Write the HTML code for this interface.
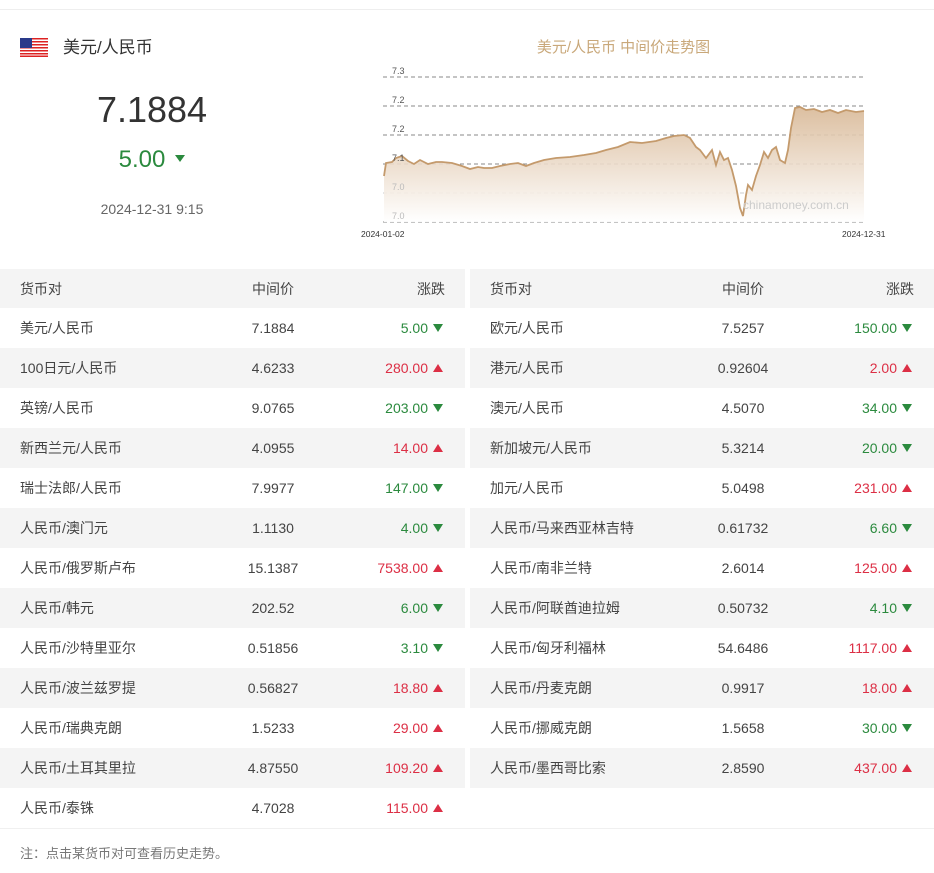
<!DOCTYPE html>
<html><head><meta charset="utf-8"><style>
*{margin:0;padding:0;box-sizing:border-box}
body{width:934px;height:873px;background:#fff;font-family:"Liberation Sans","Noto Sans CJK SC",sans-serif;color:#333;position:relative;overflow:hidden}
.abs{position:absolute;white-space:nowrap}
.g{color:#2b8a3e}.r{color:#dc2f45}
table{position:absolute;top:269px;border-collapse:collapse;font-size:14px;color:#444}
td{height:40px;padding:0}
tr:nth-child(odd){background:#f4f4f4}
tr:first-child td{height:39px}
.n{padding-left:20px;width:200px}
.m{text-align:center;width:146px}
.c{text-align:right;padding-right:22px}
.tri{display:inline-block;width:0;height:0;border-left:5px solid transparent;border-right:5px solid transparent;margin-left:5px;vertical-align:1px}
.dn{border-top:8px solid #2b8a3e}.up{border-bottom:8px solid #dc2f45}
</style></head><body>
<div class="abs" style="left:0;top:9px;width:934px;border-top:1px solid #eee"></div>
<svg class="abs" style="left:20px;top:38px" width="28" height="19" viewBox="0 0 28 19">
<rect width="28" height="19" fill="#fff"/>
<g fill="#d22"><rect y="0" width="28" height="1.5"/><rect y="3" width="28" height="1.5"/><rect y="6" width="28" height="1.5"/><rect y="9" width="28" height="1.5"/><rect y="12" width="28" height="1.5"/><rect y="15" width="28" height="1.5"/><rect y="17.5" width="28" height="1.5"/></g>
<rect width="12" height="10" fill="#2a3a8a"/></svg>
<div class="abs" style="left:63px;top:33px;font-size:17px">美元/人民币</div>
<div class="abs" style="left:0;width:304px;text-align:center;top:89px;font-size:36px;color:#333">7.1884</div>
<div class="abs g" style="left:0;width:304px;text-align:center;top:146px;font-size:24px">5.00<span class="tri dn" style="margin-left:10px;vertical-align:5px;border-left-width:5px;border-right-width:5px;border-top-width:7px"></span></div>
<div class="abs" style="left:0;width:304px;text-align:center;top:201px;font-size:14px;color:#666">2024-12-31 9:15</div>
<div class="abs" style="left:383px;width:481px;text-align:center;top:36px;font-size:15px;color:#c9a87a">美元/人民币 中间价走势图</div>
<svg class="abs" style="left:355px;top:60px" width="545" height="185" viewBox="355 60 545 185">
<defs><linearGradient id="gr" x1="0" y1="0" x2="0" y2="1"><stop offset="0" stop-color="#d8b896"/><stop offset="1" stop-color="#fff"/></linearGradient></defs>
<g stroke="#888" stroke-dasharray="4 3" stroke-width="1"><line x1="383" y1="77" x2="864" y2="77"/><line x1="383" y1="106" x2="864" y2="106"/><line x1="383" y1="135" x2="864" y2="135"/><line x1="383" y1="164" x2="864" y2="164"/><line x1="383" y1="193" x2="864" y2="193" stroke="#ccc"/><line x1="383" y1="222" x2="864" y2="222"/></g>
<path d="M384 176 L386 163 L392 162 L396 158 L402 156 L408 161 L414 164 L420 160 L428 164 L436 162 L442 162 L452 163 L462 166 L470 169 L478 167 L484 168 L492 168 L500 166 L510 164 L518 163 L526 166 L534 163 L544 160 L556 158 L570 157 L584 155 L596 153 L606 150 L618 147 L630 142 L642 143 L656 141 L666 138 L674 136 L684 135 L690 138 L696 147 L700 150 L706 158 L712 150 L716 165 L720 152 L724 160 L728 158 L732 170 L736 186 L740 208 L743 216 L746 195 L748 185 L752 190 L756 176 L760 165 L764 152 L768 158 L772 150 L776 147 L780 160 L785 163 L788 150 L791 128 L795 108 L800 107 L806 110 L814 109 L822 112 L830 110 L838 113 L846 110 L856 112 L864 111 L864 222 L384 222 Z" fill="url(#gr)" opacity="0.9"/>
<path d="M384 176 L386 163 L392 162 L396 158 L402 156 L408 161 L414 164 L420 160 L428 164 L436 162 L442 162 L452 163 L462 166 L470 169 L478 167 L484 168 L492 168 L500 166 L510 164 L518 163 L526 166 L534 163 L544 160 L556 158 L570 157 L584 155 L596 153 L606 150 L618 147 L630 142 L642 143 L656 141 L666 138 L674 136 L684 135 L690 138 L696 147 L700 150 L706 158 L712 150 L716 165 L720 152 L724 160 L728 158 L732 170 L736 186 L740 208 L743 216 L746 195 L748 185 L752 190 L756 176 L760 165 L764 152 L768 158 L772 150 L776 147 L780 160 L785 163 L788 150 L791 128 L795 108 L800 107 L806 110 L814 109 L822 112 L830 110 L838 113 L846 110 L856 112 L864 111" fill="none" stroke="#c49a6c" stroke-width="1.8"/>
<g font-size="9" fill="#555" font-family="Liberation Sans"><text x="392" y="74">7.3</text><text x="392" y="103">7.2</text><text x="392" y="132">7.2</text><text x="392" y="161">7.1</text><text x="392" y="190" fill="#bbb">7.0</text><text x="392" y="219" fill="#bbb">7.0</text>
<text x="361" y="237" font-size="8.5" fill="#333">2024-01-02</text><text x="842" y="237" font-size="8.5" fill="#333">2024-12-31</text></g>
<text x="743" y="209" font-size="12" fill="#ccc" font-family="Liberation Sans">chinamoney.com.cn</text>
</svg>

<table style="left:0;width:465px">
<tr><td class="n">货币对</td><td class="m">中间价</td><td class="c" style="padding-right:20px">涨跌</td></tr>
<tr><td class="n">美元/人民币</td><td class="m">7.1884</td><td class="c g">5.00<span class="tri dn"></span></td></tr>
<tr><td class="n">100日元/人民币</td><td class="m">4.6233</td><td class="c r">280.00<span class="tri up"></span></td></tr>
<tr><td class="n">英镑/人民币</td><td class="m">9.0765</td><td class="c g">203.00<span class="tri dn"></span></td></tr>
<tr><td class="n">新西兰元/人民币</td><td class="m">4.0955</td><td class="c r">14.00<span class="tri up"></span></td></tr>
<tr><td class="n">瑞士法郎/人民币</td><td class="m">7.9977</td><td class="c g">147.00<span class="tri dn"></span></td></tr>
<tr><td class="n">人民币/澳门元</td><td class="m">1.1130</td><td class="c g">4.00<span class="tri dn"></span></td></tr>
<tr><td class="n">人民币/俄罗斯卢布</td><td class="m">15.1387</td><td class="c r">7538.00<span class="tri up"></span></td></tr>
<tr><td class="n">人民币/韩元</td><td class="m">202.52</td><td class="c g">6.00<span class="tri dn"></span></td></tr>
<tr><td class="n">人民币/沙特里亚尔</td><td class="m">0.51856</td><td class="c g">3.10<span class="tri dn"></span></td></tr>
<tr><td class="n">人民币/波兰兹罗提</td><td class="m">0.56827</td><td class="c r">18.80<span class="tri up"></span></td></tr>
<tr><td class="n">人民币/瑞典克朗</td><td class="m">1.5233</td><td class="c r">29.00<span class="tri up"></span></td></tr>
<tr><td class="n">人民币/土耳其里拉</td><td class="m">4.87550</td><td class="c r">109.20<span class="tri up"></span></td></tr>
<tr><td class="n">人民币/泰铢</td><td class="m">4.7028</td><td class="c r">115.00<span class="tri up"></span></td></tr>
</table>
<table style="left:470px;width:464px">
<tr><td class="n">货币对</td><td class="m">中间价</td><td class="c" style="padding-right:20px">涨跌</td></tr>
<tr><td class="n">欧元/人民币</td><td class="m">7.5257</td><td class="c g">150.00<span class="tri dn"></span></td></tr>
<tr><td class="n">港元/人民币</td><td class="m">0.92604</td><td class="c r">2.00<span class="tri up"></span></td></tr>
<tr><td class="n">澳元/人民币</td><td class="m">4.5070</td><td class="c g">34.00<span class="tri dn"></span></td></tr>
<tr><td class="n">新加坡元/人民币</td><td class="m">5.3214</td><td class="c g">20.00<span class="tri dn"></span></td></tr>
<tr><td class="n">加元/人民币</td><td class="m">5.0498</td><td class="c r">231.00<span class="tri up"></span></td></tr>
<tr><td class="n">人民币/马来西亚林吉特</td><td class="m">0.61732</td><td class="c g">6.60<span class="tri dn"></span></td></tr>
<tr><td class="n">人民币/南非兰特</td><td class="m">2.6014</td><td class="c r">125.00<span class="tri up"></span></td></tr>
<tr><td class="n">人民币/阿联酋迪拉姆</td><td class="m">0.50732</td><td class="c g">4.10<span class="tri dn"></span></td></tr>
<tr><td class="n">人民币/匈牙利福林</td><td class="m">54.6486</td><td class="c r">1117.00<span class="tri up"></span></td></tr>
<tr><td class="n">人民币/丹麦克朗</td><td class="m">0.9917</td><td class="c r">18.00<span class="tri up"></span></td></tr>
<tr><td class="n">人民币/挪威克朗</td><td class="m">1.5658</td><td class="c g">30.00<span class="tri dn"></span></td></tr>
<tr><td class="n">人民币/墨西哥比索</td><td class="m">2.8590</td><td class="c r">437.00<span class="tri up"></span></td></tr>
<tr style="background:#fff"><td class="n"></td><td class="m"></td><td class="c"></td></tr>
</table>
<div class="abs" style="left:0;top:828px;width:934px;border-top:1px solid #f0f0f0"></div>
<div class="abs" style="left:20px;top:843px;font-size:13px;color:#777">注：点击某货币对可查看历史走势。</div>
</body></html>
